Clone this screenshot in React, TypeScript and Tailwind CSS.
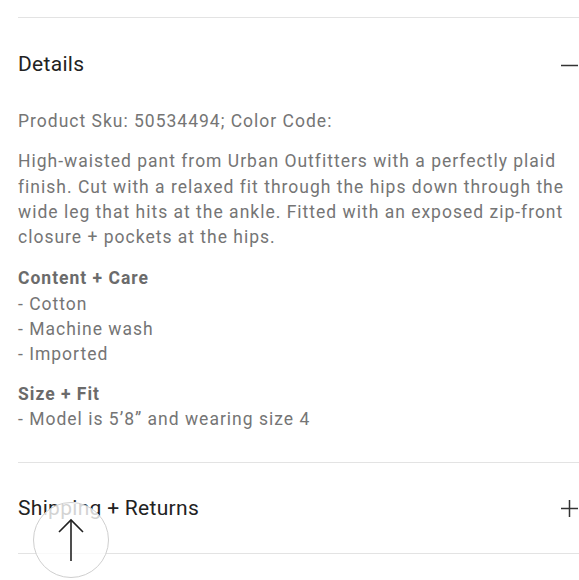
function ScrollTopButton() {
  return (
    <button className="absolute left-[33px] top-[502px] w-[76px] h-[76px] rounded-full border border-[#cfcfcf] bg-white/80 flex items-center justify-center">
      <svg width="26" height="44" viewBox="0 0 26 44" fill="none" stroke="#222" strokeWidth="1.6">
        <path d="M13 2 V43" />
        <path d="M1 14 L13 2 L25 14" />
      </svg>
    </button>
  );
}

function ToggleIcon({ open }: { open: boolean }) {
  return (
    <svg width="17" height="17" viewBox="0 0 17 17" fill="none" stroke="#333" strokeWidth="1.5" className="shrink-0">
      <path d="M0 8.5 H17" />
      {!open && <path d="M8.5 0 V17" />}
    </svg>
  );
}

export default function App() {
  return (
    <div className="relative w-[579px] h-[580px] overflow-hidden bg-white font-['Roboto',sans-serif]">
      <div className="pl-[18px] pt-[17px]">
        <div className="border-t border-[#e3e3e3]">
          <div className="flex items-center justify-between h-[91px] pt-[3px] pr-[1px]">
            <h3 className="text-[21px] text-[#222] tracking-[0.3px]">Details</h3>
            <ToggleIcon open />
          </div>
          <div className="text-[17.5px] leading-[25.3px] text-[#757575] tracking-[1px] pr-[8px]">
            <p className="mb-[15px]">Product Sku: 50534494; Color Code:</p>
            <p className="mb-[16px]">
              High-waisted pant from Urban Outfitters with a perfectly plaid finish. Cut with a relaxed fit through the hips down through the wide leg that hits at the ankle. Fitted with an exposed zip-front closure + pockets at the hips.
            </p>
            <p className="font-bold text-[#6b6b6b]">Content + Care</p>
            <p>- Cotton</p>
            <p>- Machine wash</p>
            <p className="mb-[14px]">- Imported</p>
            <p className="font-bold text-[#6b6b6b]">Size + Fit</p>
            <p>- Model is 5’8” and wearing size 4</p>
          </div>
        </div>
        <div className="border-t border-[#e3e3e3] mt-[30px]">
          <div className="flex items-center justify-between h-[90px] pr-[1px]">
            <h3 className="text-[21px] text-[#222] tracking-[0.3px]">Shipping + Returns</h3>
            <ToggleIcon open={false} />
          </div>
        </div>
        <div className="border-t border-[#e3e3e3]" />
      </div>
      <ScrollTopButton />
    </div>
  );
}
